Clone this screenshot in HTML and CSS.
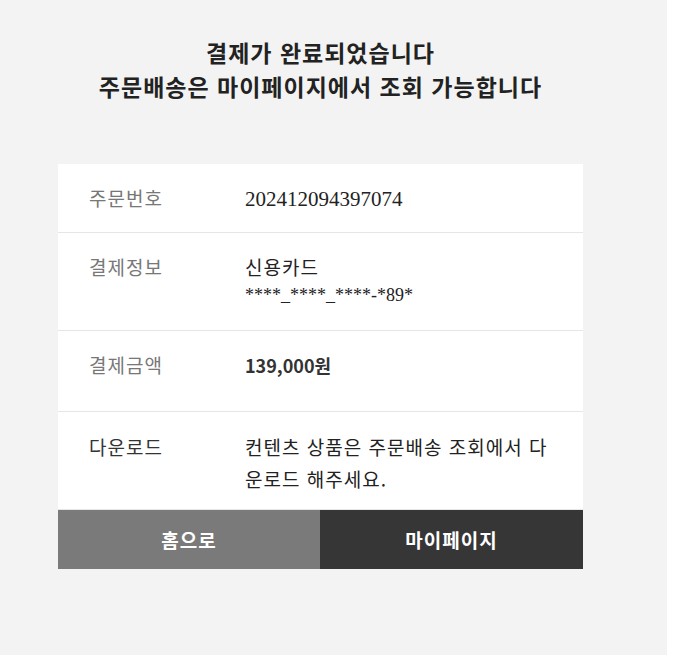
FILE: index.html
```html
<!DOCTYPE html>
<html lang="ko">
<head>
<meta charset="utf-8">
<title>결제 완료</title>
<link rel="stylesheet" href="styles.css">
</head>
<body>
<div class="page">
  <div class="wrap">
    <h1 class="title">결제가 완료되었습니다<br>주문배송은 마이페이지에서 조회 가능합니다</h1>
    <div class="card">
      <div class="row row-order">
        <div class="label">주문번호</div>
        <div class="value"><span class="num">202412094397074</span></div>
      </div>
      <div class="row row-pay">
        <div class="label">결제정보</div>
        <div class="value">
          <div class="pay-type">신용카드</div>
          <div class="card-no">****_****_****-*89*</div>
        </div>
      </div>
      <div class="row row-amount">
        <div class="label">결제금액</div>
        <div class="value"><strong class="amount">139,000원</strong></div>
      </div>
      <div class="row row-download">
        <div class="label label-dark">다운로드</div>
        <div class="value value-text">컨텐츠 상품은 주문배송 조회에서 다운로드 해주세요.</div>
      </div>
    </div>
    <div class="buttons">
      <a class="btn btn-home" href="#">홈으로</a>
      <a class="btn btn-my" href="#">마이페이지</a>
    </div>
  </div>
</div>
</body>
</html>
```

FILE: styles.css
```css
html, body {
  margin: 0;
  padding: 0;
  background: #ffffff;
}

body {
  font-family: "Noto Sans CJK KR", "Noto Sans", sans-serif;
  color: #222222;
}

.page {
  width: 667px;
  min-height: 655px;
  background: #f3f3f3;
  padding-top: 35px;
  box-sizing: border-box;
}

.wrap {
  width: 525px;
  margin-left: 58px;
}

.title {
  margin: 0 0 61px;
  text-align: center;
  font-size: 23px;
  letter-spacing: 1px;
  line-height: 34px;
  font-weight: 700;
  color: #222222;
}

.card {
  background: #ffffff;
}

.row {
  display: grid;
  grid-template-columns: 156px 1fr;
  padding: 21px 30px 20px 31px;
  border-bottom: 1px solid #e6e6e6;
}

.label {
  font-size: 19px;
  letter-spacing: 1px;
  line-height: 25px;
  color: #777777;
}

.label-dark {
  color: #333333;
}

.value {
  font-size: 19px;
  letter-spacing: 1px;
  line-height: 25px;
  color: #222222;
}

.num {
  font-family: "Liberation Serif", serif;
  font-size: 21px;
  letter-spacing: 0;
}

.row-pay .label,
.pay-type {
  line-height: 26px;
}

.card-no {
  font-family: "Liberation Serif", serif;
  font-size: 18px;
  letter-spacing: 0;
  line-height: 30px;
}

.row-amount {
  padding-bottom: 33px;
}

.row-amount .label,
.row-amount .value {
  line-height: 26px;
}

.amount {
  font-size: 18px;
  letter-spacing: 0;
  font-weight: 700;
  color: #333333;
}

.row-download {
  padding-top: 19px;
  padding-bottom: 14px;
}

.row-download .label,
.value-text {
  line-height: 32px;
}

.value-text {
  color: #222222;
}

.buttons {
  display: grid;
  grid-template-columns: 262px 263px;
}

.btn {
  display: block;
  height: 59px;
  line-height: 59px;
  text-align: center;
  font-size: 19px;
  letter-spacing: 1px;
  font-weight: 700;
  color: #ffffff;
  text-decoration: none;
}

.btn-home {
  background: #7a7a7a;
}

.btn-my {
  background: #363636;
}
```
